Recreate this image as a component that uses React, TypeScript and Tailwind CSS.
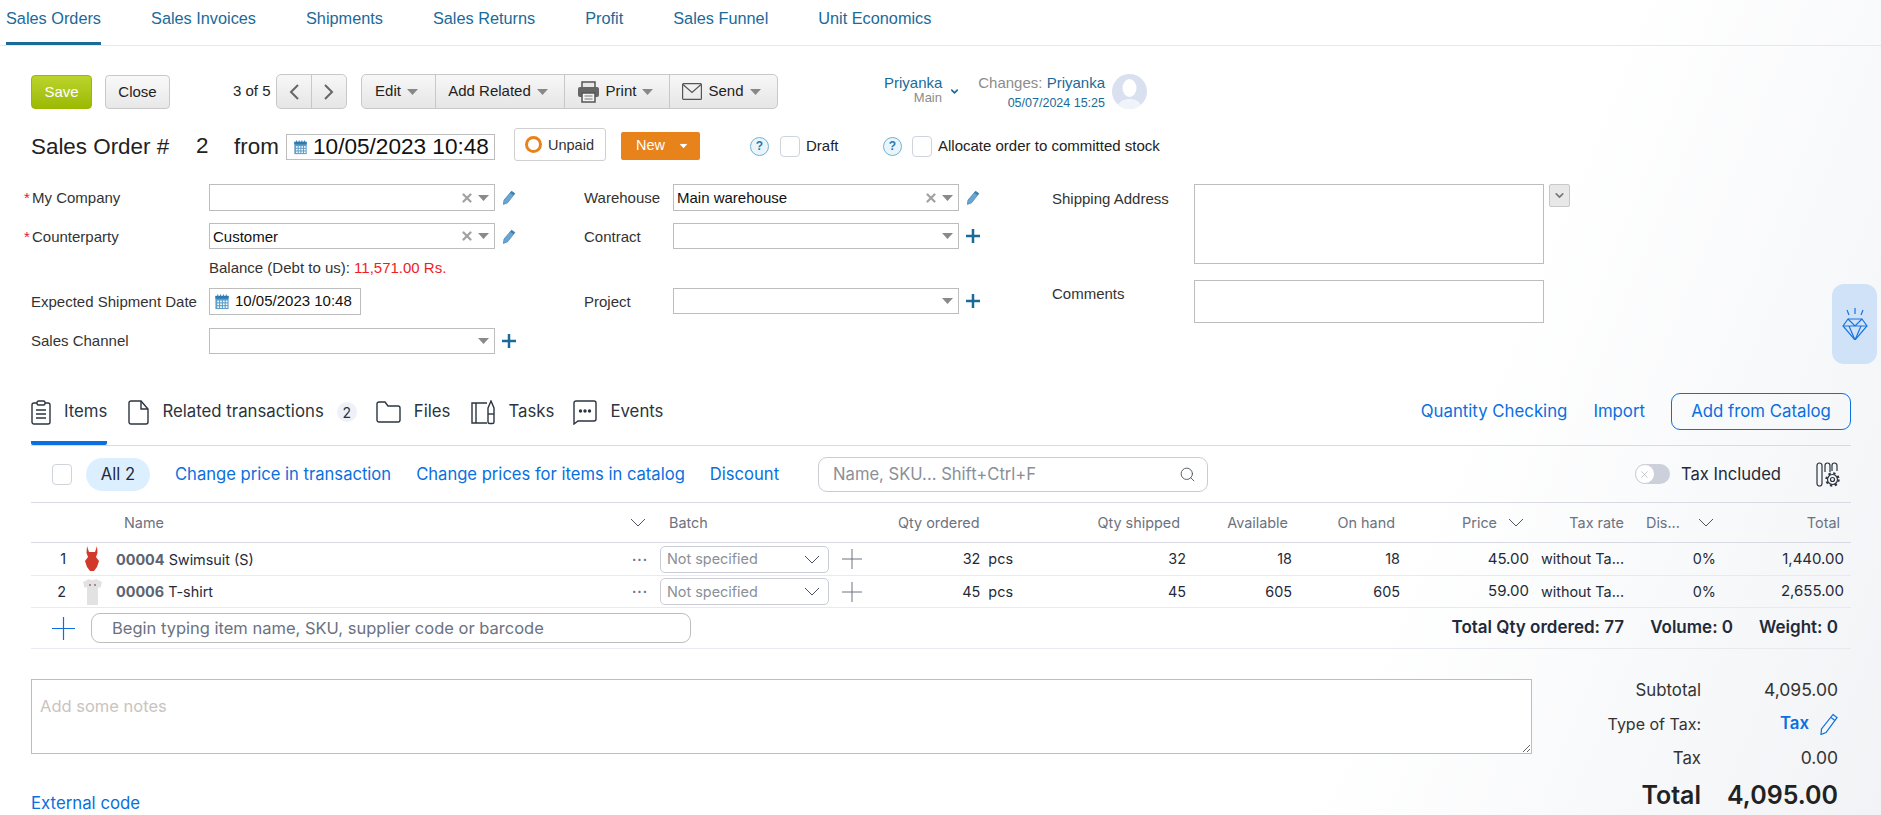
import { ChevronDown, Search, X } from "lucide-react";
import type { ReactNode } from "react";

const ROW_GRID =
  "grid grid-cols-[41px_44px_514px_25px_180px_35px_150px_166px_106px_108px_129px_107px_80px_135px] items-center";

const TOP_TABS = ["Sales Invoices", "Shipments", "Sales Returns", "Profit", "Sales Funnel", "Unit Economics"];

function Caret({ className = "" }: { className?: string }) {
  return (
    <svg width="11" height="6" viewBox="0 0 11 6" className={className}>
      <path d="M0 0h11L5.500 6z" fill="currentColor" />
    </svg>
  );
}

function Cross({ size, stroke, className = "" }: { size: number; stroke: number; className?: string }) {
  return (
    <svg width={size} height={size} viewBox={`0 0 ${size} ${size}`} className={`shrink-0 ${className}`}>
      <path d={`M${size / 2} 0v${size}M0 ${size / 2}h${size}`} stroke="currentColor" strokeWidth={stroke} />
    </svg>
  );
}

function ThinChevron({ className = "" }: { className?: string }) {
  return (
    <svg width="16" height="9" viewBox="0 0 16 9" fill="none" stroke="currentColor" strokeWidth="1" className={`shrink-0 ${className}`}>
      <path d="M1 1l7 7 7-7" />
    </svg>
  );
}

function CalendarIcon({ size = 16 }: { size?: number }) {
  return (
    <svg width={size} height={size} viewBox="0 0 16 17" className="shrink-0">
      <rect x="1" y="2" width="14" height="14" fill="#5f9ecb" />
      <rect x="1" y="2" width="14" height="3" fill="#2f7bb0" />
      <path d="M3.500 0.500v3M6.500 0.500v3M9.500 0.500v3M12.500 0.500v3" stroke="#2f7bb0" strokeWidth="1" />
      {[3, 6, 9, 12].map((x) =>
        [7, 10, 13].map((y) => <rect key={`${x}-${y}`} x={x} y={y} width="1.800" height="1.800" fill="#fff" />),
      )}
    </svg>
  );
}

function PencilIcon() {
  return (
    <svg width="14" height="15" viewBox="0 0 14 15" className="shrink-0">
      <path d="M9.500 1.200l3.300 2.300-7.200 9.300-4.200 1.600.6-4.300z" fill="#6ba6d3" stroke="#4a8aba" strokeWidth="0.800" />
      <path d="M9.500 1.200l3.300 2.300-1.300 1.700-3.300-2.300z" fill="#3f7fae" />
    </svg>
  );
}

function Help() {
  return (
    <span className="w-[19px] h-[19px] rounded-full border border-[#6fb0d8] bg-[#eaf5fb] text-[#2a78a8] text-[12px] font-bold flex items-center justify-center shrink-0">
      ?
    </span>
  );
}

function Box() {
  return <span className="block w-[20px] h-[21px] rounded-[4px] border border-[#cfd3dc] bg-white shrink-0" />;
}

function Combo({ value, clear, edit, add, tall }: { value?: string; clear?: boolean; edit?: boolean; add?: boolean; tall?: boolean }) {
  return (
    <>
      <div
        className={`w-[286px] ${tall ? "h-[27px] pt-0" : "h-[26px]"} border border-[#bdbdbd] bg-white flex items-center pl-[3px] pr-[5px] text-[15px] text-[#111]`}
      >
        <span className={`flex-1 ${tall ? "pt-[1px]" : "pt-[2px]"}`}>{value}</span>
        {clear && <X size={14} strokeWidth={4} className="text-[#a3a3a3] mr-[4px]" />}
        <Caret className="text-[#8a8a8a]" />
      </div>
      {edit && (
        <span className="ml-[7px]">
          <PencilIcon />
        </span>
      )}
      {add && <Cross size={14} stroke={2.500} className="ml-[7px] text-[#1a6a9a]" />}
    </>
  );
}

function ToolButton({ children, width, first }: { children: ReactNode; width: string; first?: boolean }) {
  return (
    <div className={`${width} ${first ? "" : "border-l border-[#c8c8c8]"} h-full flex items-center justify-center gap-[6px] pr-[4px]`}>
      {children}
    </div>
  );
}

function TabItem({ icon, label, badge, active, className = "" }: { icon: ReactNode; label: string; badge?: string; active?: boolean; className?: string }) {
  return (
    <div
      className={`h-[52px] border-b-4 pb-[10px] flex items-center gap-[13px] ${active ? "border-[#0a6fe0] rounded-b-[2px]" : "border-transparent"} ${className}`}
    >
      {icon}
      <span>{label}</span>
      {badge && (
        <span className="w-[20px] h-[20px] rounded-full bg-[#eef1f7] text-[14px] flex items-center justify-center">{badge}</span>
      )}
    </div>
  );
}

function Row({ n, code, name, art, qty, avail, price, total, height }: { n: string; code: string; name: string; art: ReactNode; qty: string; avail: string; price: string; total: string; height: string }) {
  return (
    <div className={`${ROW_GRID} ${height} border-b border-[#e8eaef] text-[14.400px] text-[#1f2a3a]`}>
      <span className="text-right pr-[6px]">{n}</span>
      <span className="pl-[10px] flex items-center">{art}</span>
      <span className="pt-[1px]">
        <b className="font-bold text-[#5a6472]">{code}</b> {name}
      </span>
      <span className="text-[#6b7280] font-bold tracking-[1px] text-[13px] leading-none pl-[2px]">···</span>
      <div className="ml-[5px] w-[169px] h-[27px] rounded-[5px] border border-[#c9ccd6] bg-white flex items-center justify-between pl-[6px] pr-[8px] text-[#8a8f98]">
        <span>Not specified</span>
        <ThinChevron className="text-[#4b5563]" />
      </div>
      <Cross size={20} stroke={1} className="text-[#6b7280] ml-[7px]" />
      <div className="flex justify-end pr-[7px] gap-[8px]">
        <span>{qty}</span>
        <span>pcs</span>
      </div>
      <span className="text-right">{qty}</span>
      <span className="text-right">{avail}</span>
      <span className="text-right">{avail}</span>
      <span className="text-right text-[15px]">{price}</span>
      <span className="pl-[12px]">without Ta...</span>
      <span className="text-right">0%</span>
      <span className="text-right pr-[7px] text-[15px]">{total}</span>
    </div>
  );
}

export default function App() {
  return (
    <div className="relative h-[815px] w-full overflow-hidden bg-[linear-gradient(112deg,#ffffff_74%,#f1f3f6_100%)] font-['Liberation_Sans',Arial,sans-serif] text-[15px] text-[#333]">
      {/* top tabs */}
      <nav className="h-[46px] border-b border-[#e8e8e8] pl-[6px] flex gap-[50px] text-[16.300px] text-[#1a6a9a]">
        <div className="h-[45px] border-b-[3px] border-[#1a6a9a] pb-[6px] flex items-center">Sales Orders</div>
        {TOP_TABS.map((tab) => (
          <div key={tab} className="h-[45px] pb-[9px] flex items-center">
            {tab}
          </div>
        ))}
      </nav>

      {/* toolbar */}
      <div className="mt-[28px] h-[35px] pl-[31px] flex text-[15px] text-[#222]">
        <button className="w-[61px] h-[34px] mt-[1px] pt-[1px] rounded-[4px] border border-[#9ab800] bg-gradient-to-b from-[#bcd42a] to-[#9cb900] text-white">
          Save
        </button>
        <button className="ml-[13px] w-[65px] h-[34px] mt-[1px] pt-[1px] rounded-[4px] border border-[#c8c8c8] bg-gradient-to-b from-[#f9f9f9] to-[#e8e8e8]">
          Close
        </button>
        <span className="ml-[63px] w-[43px] self-center">3 of 5</span>
        <div className="w-[71px] h-[35px] flex rounded-[5px] border border-[#c8c8c8] bg-gradient-to-b from-[#f7f7f7] to-[#e6e6e6] text-[#666]">
          <div className="flex-1 flex items-center justify-center">
            <svg width="10" height="16" viewBox="0 0 10 16" fill="none" stroke="currentColor" strokeWidth="2">
              <path d="M9 1L2 8l7 7" />
            </svg>
          </div>
          <div className="flex-1 flex items-center justify-center border-l border-[#c8c8c8]">
            <svg width="10" height="16" viewBox="0 0 10 16" fill="none" stroke="currentColor" strokeWidth="2">
              <path d="M1 1l7 7-7 7" />
            </svg>
          </div>
        </div>
        <div className="ml-[14px] w-[417px] h-[35px] flex rounded-[5px] border border-[#c8c8c8] bg-gradient-to-b from-[#f7f7f7] to-[#e6e6e6]">
          <ToolButton width="w-[73px]" first>
            Edit <Caret className="text-[#888]" />
          </ToolButton>
          <ToolButton width="w-[129px]">
            Add Related <Caret className="text-[#888]" />
          </ToolButton>
          <ToolButton width="w-[105px]">
            <svg width="23" height="22" viewBox="0 0 23 22">
              <rect x="5" y="1" width="13" height="6" fill="#e8e8e8" stroke="#555" strokeWidth="1.500" />
              <rect x="1" y="6" width="21" height="10" rx="2" fill="#666" />
              <rect x="5" y="12" width="13" height="9" fill="#f2f2f2" stroke="#555" strokeWidth="1.500" />
              <path d="M7.500 15h8M7.500 18h8" stroke="#777" />
            </svg>
            Print <Caret className="text-[#888]" />
          </ToolButton>
          <ToolButton width="w-[108px]">
            <svg width="20" height="17" viewBox="0 0 20 17" fill="none" stroke="#555" strokeWidth="1.200">
              <rect x="0.600" y="0.600" width="18.800" height="15.800" rx="1" />
              <path d="M1 1.500l9 8 9-8" />
            </svg>
            Send <Caret className="text-[#888]" />
          </ToolButton>
        </div>
        <div className="ml-[106px] w-[58px] text-right leading-none pt-[1px]">
          <div className="text-[#1a6a9a] text-[15px] leading-[16px]">Priyanka</div>
          <div className="text-[#8c8c8c] text-[13px] leading-[14px]">Main</div>
        </div>
        <ChevronDown size={11} strokeWidth={3.500} className="text-[#1a6a9a] ml-[7px] mt-[12px]" />
        <div className="ml-[17px] w-[128px] text-right pt-[1px]">
          <div className="text-[15px] leading-[16px] text-[#8c8c8c]">
            Changes: <span className="text-[#1a6a9a]">Priyanka</span>
          </div>
          <div className="text-[12.500px] mt-[5px] leading-[14px] text-[#1a6a9a]">05/07/2024 15:25</div>
        </div>
        <div className="ml-[7px] w-[35px] h-[35px] rounded-full bg-[#d9e0f0] overflow-hidden">
          <svg width="35" height="35" viewBox="0 0 35 35">
            <ellipse cx="17.500" cy="14" rx="7" ry="9" fill="#fff" />
            <path d="M5 35c1-8 7-10 12.500-10S29 27 30 35z" fill="#f0f3fa" />
          </svg>
        </div>
      </div>

      {/* title */}
      <div className="mt-[19px] h-[36px] pl-[31px] flex items-center text-[#222]">
        <span className="w-[165px] text-[22.400px] mt-[2px]">Sales Order #</span>
        <span className="w-[38px] text-[22.400px]">2</span>
        <span className="w-[52px] text-[22.400px] mt-[2px]">from</span>
        <div className="w-[209px] h-[26px] mt-[2px] border border-[#bdbdbd] bg-white flex items-center pl-[6px] gap-[5px] text-[22.600px] text-[#111]">
          <CalendarIcon size={15} />
          <span>10/05/2023 10:48</span>
        </div>
        <div className="ml-[19px] self-start w-[92px] h-[33px] rounded-[3px] border border-[#d0d0d0] bg-white flex items-center pl-[10px] gap-[6px] text-[14.500px] text-[#333]">
          <span className="w-[17px] h-[17px] rounded-full border-[3px] border-[#e8821a]" />
          <span className="pt-[2px]">Unpaid</span>
        </div>
        <div className="ml-[15px] w-[79px] h-[28px] rounded-[2px] bg-[#e8821a] text-white text-[14.500px] flex items-center pl-[15px] gap-[13px]">
          New <Caret className="scale-75" />
        </div>
        <span className="ml-[50px]">
          <Help />
        </span>
        <span className="ml-[11px]">
          <Box />
        </span>
        <span className="ml-[6px] w-[77px] pt-[1px]">Draft</span>
        <Help />
        <span className="ml-[10px]">
          <Box />
        </span>
        <span className="ml-[6px] pt-[1px]">Allocate order to committed stock</span>
      </div>

      {/* form */}
      <div className="mt-[20px] h-[170px] pl-[24px] flex">
        <div className="w-[560px]">
          <div className="flex items-center h-[27px]">
            <span className="w-[185px] pt-[1px]">
              <span className="text-[#e0202a] inline-block w-[8px]">*</span>My Company
            </span>
            <Combo clear edit tall />
          </div>
          <div className="flex items-center h-[26px] mt-[12px]">
            <span className="w-[185px] pt-[2px]">
              <span className="text-[#e0202a] inline-block w-[8px]">*</span>Counterparty
            </span>
            <Combo value="Customer" clear edit />
          </div>
          <div className="h-[39px] pl-[185px] flex items-center">
            Balance (Debt to us):&nbsp;<span className="text-[#f01c24]">11,571.00 Rs.</span>
          </div>
          <div className="flex items-center h-[27px]">
            <span className="w-[185px] pl-[7px] pt-[1px]">Expected Shipment Date</span>
            <div className="w-[152px] h-[27px] border border-[#bdbdbd] bg-white flex items-center pl-[4px] gap-[5px] text-[#111]">
              <CalendarIcon />
              <span>10/05/2023 10:48</span>
            </div>
          </div>
          <div className="flex items-center h-[26px] mt-[13px]">
            <span className="w-[185px] pl-[7px]">Sales Channel</span>
            <Combo add />
          </div>
        </div>
        <div className="w-[468px]">
          <div className="flex items-center h-[27px]">
            <span className="w-[89px] pt-[1px]">Warehouse</span>
            <Combo value="Main warehouse" clear edit tall />
          </div>
          <div className="flex items-center h-[26px] mt-[12px]">
            <span className="w-[89px] pt-[2px]">Contract</span>
            <Combo add />
          </div>
          <div className="flex items-center h-[26px] mt-[39px]">
            <span className="w-[89px] pt-[2px]">Project</span>
            <Combo add />
          </div>
        </div>
        <div>
          <div className="flex">
            <span className="w-[142px] mt-[4px]">Shipping Address</span>
            <div className="w-[350px] h-[80px] border border-[#bdbdbd] bg-white" />
            <div className="ml-[5px] w-[21px] h-[23px] rounded-[2px] border border-[#c8c8c8] bg-[#e8e8e8] text-[#777] flex items-center justify-center">
              <ChevronDown size={13} strokeWidth={3} />
            </div>
          </div>
          <div className="flex mt-[16px]">
            <span className="w-[142px] mt-[3px]">Comments</span>
            <div className="w-[350px] h-[43px] border border-[#bdbdbd] bg-white" />
          </div>
        </div>
      </div>

      {/* lower part */}
      <div className="mt-[39px] mx-[31px] w-[1820px] font-['Inter',sans-serif] text-[#1f2a3a]">
        <div className="h-[53px] border-b border-[#d8d9e3] flex justify-between text-[16.800px]">
          <div className="flex gap-[21px] text-[#2b3440]">
            <TabItem
              active
              label="Items"
              icon={
                <svg width="20" height="25" viewBox="0 0 20 25" fill="none" stroke="#2b3440" strokeWidth="1.400">
                  <rect x="1" y="3" width="18" height="21" rx="2" />
                  <rect x="6" y="1" width="8" height="4" rx="1.500" fill="#fff" />
                  <path d="M5 10h10M5 14h10M5 18h10" />
                </svg>
              }
            />
            <TabItem
              label="Related transactions"
              badge="2"
              className="-mr-[2px]"
              icon={
                <svg width="21" height="25" viewBox="0 0 21 25" fill="none" stroke="#2b3440" strokeWidth="1.400">
                  <path d="M3 1h10l7 8v13a2 2 0 0 1-2 2H3a2 2 0 0 1-2-2V3a2 2 0 0 1 2-2z" />
                  <path d="M13 1v8h7" />
                </svg>
              }
            />
            <TabItem
              label="Files"
              icon={
                <svg width="25" height="22" viewBox="0 0 25 22" fill="none" stroke="#2b3440" strokeWidth="1.400">
                  <path d="M1 3a2 2 0 0 1 2-2h6l3 4h10a2 2 0 0 1 2 2v12a2 2 0 0 1-2 2H3a2 2 0 0 1-2-2z" />
                </svg>
              }
            />
            <TabItem
              label="Tasks"
              className="-mr-[2px]"
              icon={
                <svg width="24" height="25" viewBox="0 0 24 25" fill="none" stroke="#2b3440" strokeWidth="1.400">
                  <path d="M16 3H1v20h15" />
                  <path d="M5 3v20" />
                  <path d="M17 8l3-7 3 7v14a1.500 1.500 0 0 1-1.500 1.500h-3A1.500 1.500 0 0 1 17 22z" />
                  <path d="M17 14h6" />
                </svg>
              }
            />
            <TabItem
              label="Events"
              icon={
                <svg width="24" height="25" viewBox="0 0 24 25" fill="none" stroke="#2b3440" strokeWidth="1.400">
                  <path d="M1 3a2 2 0 0 1 2-2h18a2 2 0 0 1 2 2v16a2 2 0 0 1-2 2H5l-4 3z" />
                  <circle cx="7.500" cy="11" r="1" fill="#2b3440" />
                  <circle cx="12" cy="11" r="1" fill="#2b3440" />
                  <circle cx="16.500" cy="11" r="1" fill="#2b3440" />
                </svg>
              }
            />
          </div>
          <div className="flex items-start text-[#0a6fe0]">
            <span className="h-[37px] flex items-center">Quantity Checking</span>
            <span className="ml-[26px] h-[37px] flex items-center">Import</span>
            <button className="ml-[26px] w-[180px] h-[37px] rounded-[9px] border border-[#0a6fe0]">Add from Catalog</button>
          </div>
        </div>

        <div className="h-[57px] border-b border-[#d8d9e3] flex items-center text-[16.600px]">
          <span className="ml-[21px]">
            <Box />
          </span>
          <span className="ml-[14px] w-[64px] h-[33px] rounded-full bg-[#dcefff] flex items-center justify-center">All 2</span>
          <span className="ml-[25px] pt-[1px] text-[#0a6fe0]">Change price in transaction</span>
          <span className="ml-[25px] pt-[1px] text-[#0a6fe0]">Change prices for items in catalog</span>
          <span className="ml-[25px] pt-[1px] text-[#0a6fe0]">Discount</span>
          <div className="ml-[39px] w-[390px] h-[35px] rounded-[9px] border border-[#c9ccd6] bg-white flex items-center pl-[14px] pr-[11px]">
            <input
              readOnly
              placeholder="Name, SKU... Shift+Ctrl+F"
              className="flex-1 outline-none bg-transparent placeholder:text-[#8a8f98]"
            />
            <Search size={17} strokeWidth={1.300} className="text-[#4b5563]" />
          </div>
          <div className="ml-auto w-[35px] h-[20px] rounded-full bg-[#cbd0db] flex items-center">
            <span className="w-[20px] h-[20px] rounded-full border border-[#cbd0db] bg-white flex items-center justify-center">
              <X size={11} strokeWidth={1.500} className="text-[#aab0bd]" />
            </span>
          </div>
          <span className="ml-[11px] pt-[1px]">Tax Included</span>
          <svg width="25" height="25" viewBox="0 0 25 25" fill="none" stroke="#2b3440" strokeWidth="1.200" className="ml-[35px] mr-[10px]">
            <rect x="1" y="1" width="5" height="23" rx="2.500" />
            <path d="M9 10V3.500a2.500 2.500 0 0 1 5 0V10" />
            <path d="M16 9V3.500a2.500 2.500 0 0 1 5 0V9" />
            <circle cx="16.500" cy="17.500" r="5" />
            <circle cx="16.500" cy="17.500" r="6.200" strokeWidth="2" strokeDasharray="2.300 2.570" />
            <circle cx="16.500" cy="17.500" r="2" />
          </svg>
        </div>

        <div className={`${ROW_GRID} h-[40px] border-b border-[#d8d9e3] text-[14.400px] text-[#6b7280]`}>
          <span />
          <span />
          <span className="pl-[8px]">Name</span>
          <ThinChevron className="text-[#4b5563]" />
          <span className="pl-[14px]">Batch</span>
          <span />
          <span className="pl-[28px]">Qty ordered</span>
          <span className="text-right pr-[6px]">Qty shipped</span>
          <span className="text-right pr-[4px]">Available</span>
          <span className="text-right pr-[5px]">On hand</span>
          <div className="flex justify-end items-center pr-[5px] gap-[11px]">
            <span>Price</span>
            <ThinChevron className="text-[#4b5563]" />
          </div>
          <span className="text-right pr-[12px]">Tax rate</span>
          <div className="flex items-center pl-[10px] gap-[18px]">
            <span>Dis...</span>
            <ThinChevron className="text-[#4b5563]" />
          </div>
          <span className="text-right pr-[11px]">Total</span>
        </div>

        <Row
          n="1"
          code="00004"
          name="Swimsuit (S)"
          qty="32"
          avail="18"
          price="45.00"
          total="1,440.00"
          height="h-[33px]"
          art={
            <svg width="14" height="26" viewBox="0 0 14 26" className="ml-[3px]">
              <path d="M2 0l2 6h6l2-6 .5 7-1.500 4 3 4-2 6-3 4H5l-3-4-2-6 3-4-1.500-4z" fill="#d13a2a" />
            </svg>
          }
        />
        <Row
          n="2"
          code="00006"
          name="T-shirt"
          qty="45"
          avail="605"
          price="59.00"
          total="2,655.00"
          height="h-[32px]"
          art={
            <svg width="19" height="26" viewBox="0 0 19 26" className="ml-[1px]">
              <path d="M6 0c1 1.500 6 1.500 7 0l6 3-1.500 6-2.500-1v18H4V8L1.500 9 0 3z" fill="#e2e2e2" />
              <path d="M6 6h2M11 6h2" stroke="#b08a8a" strokeWidth="2" />
            </svg>
          }
        />

        <div className="h-[41px] border-b border-[#e8eaef] flex items-center">
          <Cross size={23} stroke={1.200} className="text-[#0a6fe0] ml-[21px]" />
          <div className="ml-[16px] w-[600px] h-[30px] rounded-[9px] border border-[#bdbdbd] bg-white flex items-center pl-[20px]">
            <input
              readOnly
              placeholder="Begin typing item name, SKU, supplier code or barcode"
              className="w-full outline-none bg-transparent text-[16.500px] placeholder:text-[#6b7280]"
            />
          </div>
          <div className="ml-auto pr-[13px] flex gap-[26px] font-semibold text-[17px]">
            <span>Total Qty ordered: 77</span>
            <span>Volume: 0</span>
            <span>Weight: 0</span>
          </div>
        </div>

        <div className="mt-[30px] flex items-start">
          <div className="w-[1501px]">
            <textarea
              readOnly
              placeholder="Add some notes"
              className="block w-full h-[75px] border border-[#bdbdbd] bg-white pl-[8px] pt-[14px] text-[16.500px] outline-none placeholder:text-[#c9c4c0]"
            />
            <div className="mt-[39px] text-[16.800px] text-[#0a6fe0] leading-[20px]">External code</div>
          </div>
          <div className="-mt-[6px] grid grid-cols-[169px_137px] text-[16.800px] text-[#333] [&>*]:text-right">
            <span className="h-[34px] leading-[34px]">Subtotal</span>
            <span className="h-[34px] leading-[34px] text-[17.500px]">4,095.00</span>
            <span className="h-[34px] leading-[34px] text-[16px]">Type of Tax:</span>
            <div className="h-[34px] flex items-center justify-end gap-[11px]">
              <b className="text-[#0a6fe0] font-semibold">Tax</b>
              <svg width="18" height="22" viewBox="0 0 18 22" fill="none" stroke="#0a6fe0" strokeWidth="1.200">
                <path d="M13 1.500l4 3L6 19.500l-5 2 .5-5.500z" />
                <path d="M11 4.500l4 3" />
              </svg>
            </div>
            <span className="h-[34px] leading-[34px]">Tax</span>
            <span className="h-[34px] leading-[34px] text-[17.500px]">0.00</span>
            <span className="h-[40px] leading-[40px] text-[25px] font-semibold text-[#222]">Total</span>
            <span className="h-[40px] leading-[40px] text-[25px] font-semibold text-[#222]">4,095.00</span>
          </div>
        </div>
      </div>

      {/* side tab */}
      <div className="absolute left-[1832px] top-[284px] w-[45px] h-[80px] rounded-[12px] bg-[#d0e2f7] flex justify-center pt-[24px]">
        <svg width="26" height="32" viewBox="0 0 26 32" fill="none" stroke="#1a73e0" strokeWidth="1.200">
          <path d="M13 0v6M5 2l2 5M21 2l-2 5" />
          <path d="M6 11h14l5 7-12 14L1 18z" />
          <path d="M1 18h24M6 11l7 7 7-7M7 18l6 14 6-14" />
        </svg>
      </div>
    </div>
  );
}
